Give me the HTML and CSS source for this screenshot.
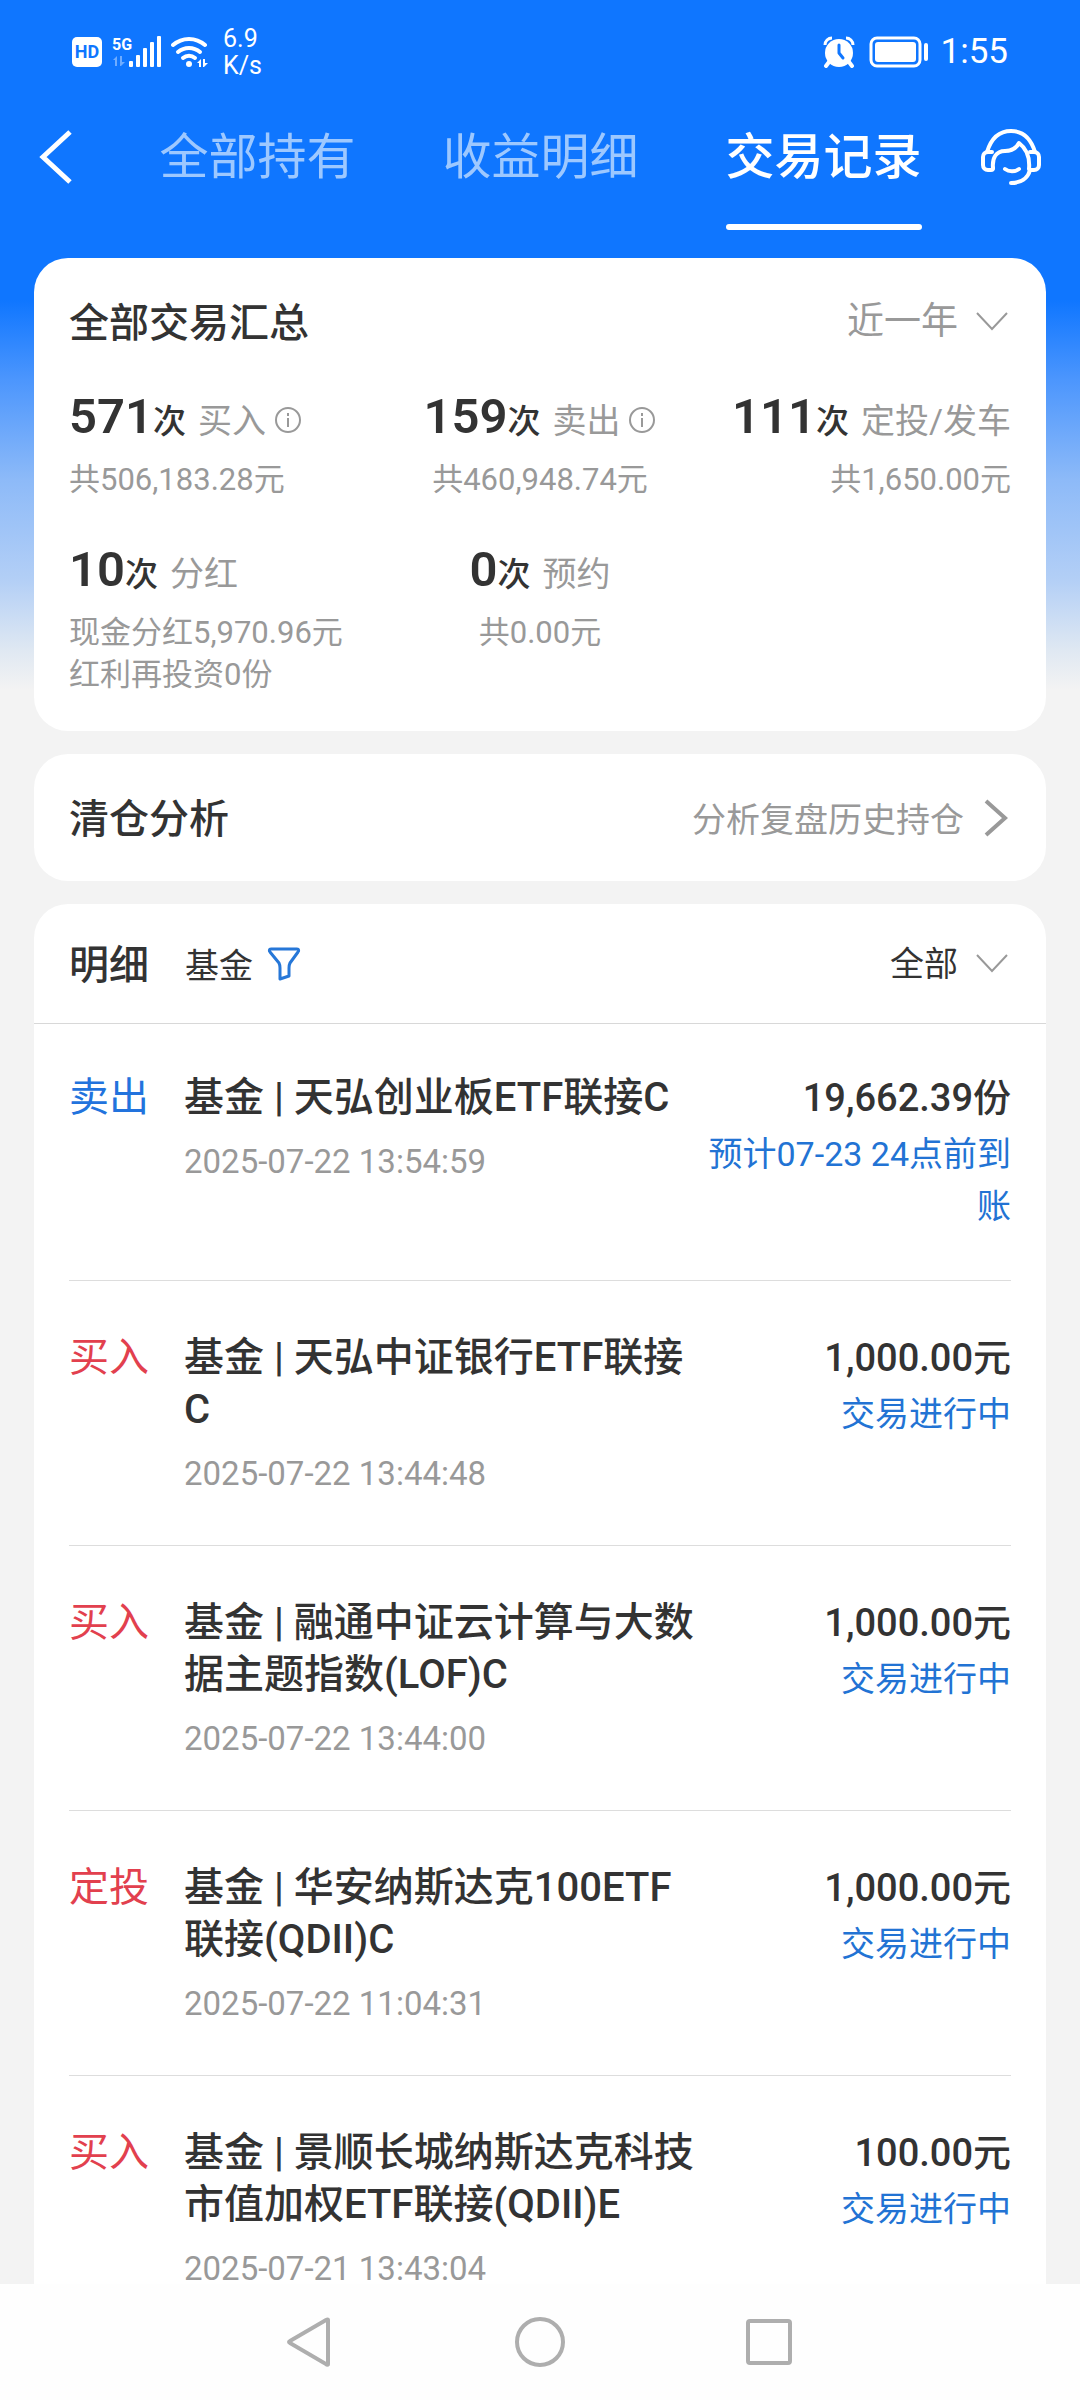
FILE: index.html
```
<!DOCTYPE html>
<html lang="zh-CN">
<head>
    <meta charset="UTF-8">
    <meta name="viewport" content="width=device-width, initial-scale=1.0">
    <title>交易记录</title>
    <link rel="stylesheet" href="styles.css">
</head>
<body>
    <div class="app">
        <!-- 状态栏 -->
        <div class="status-bar">
            <div class="status-left">
                <svg class="icon-hd" width="30" height="30" viewBox="0 0 30 30">
                    <rect width="30" height="30" rx="5" fill="#fff"/>
                    <text x="15" y="21" text-anchor="middle" font-size="18" font-weight="700" fill="#0f76ff">HD</text>
                </svg>
                <svg class="icon-signal" width="51" height="32" viewBox="0 0 51 32" fill="#fff">
                    <text x="0" y="14" font-size="16" font-weight="700">5G</text>
                    <path d="M1 24l4-4v10H3v-6zM8 20h2v6h3l-4 4H8z" opacity=".4"/>
                    <rect x="17" y="25" width="4" height="6" rx="1"/>
                    <rect x="24" y="19" width="4" height="12" rx="1"/>
                    <rect x="31" y="12" width="4" height="19" rx="1"/>
                    <rect x="38" y="6" width="4" height="25" rx="1"/>
                    <rect x="45" y="0" width="4" height="31" rx="1"/>
                </svg>
                <svg class="icon-wifi" width="38" height="32" viewBox="0 0 38 32" fill="none" stroke="#fff" stroke-width="4" stroke-linecap="round">
                    <path d="M2 9a24 24 0 0 1 32 0"/>
                    <path d="M7 16a17 17 0 0 1 22 0"/>
                    <path d="M12 22a9 9 0 0 1 12 0"/>
                    <circle cx="18" cy="28" r="3" fill="#fff" stroke="none"/>
                    <path d="M26 27l4-4v8h-2v-4zM32 23h2v4h3l-4 4h-1z" fill="#fff" stroke="none"/>
                </svg>
                <div class="net-speed">6.9<br>K/s</div>
            </div>
            <div class="status-right">
                <svg class="icon-alarm" width="32" height="32" viewBox="0 0 32 32" fill="#fff">
                    <circle cx="16" cy="17" r="14"/>
                    <path d="M2 9a7 7 0 0 1 7-7M23 2a7 7 0 0 1 7 7" fill="none" stroke="#fff" stroke-width="3"/>
                    <path d="M6 26l-3 4M26 26l3 4" stroke="#fff" stroke-width="4" stroke-linecap="round"/>
                    <path d="M16 9v8l4 5" fill="none" stroke="#0f76ff" stroke-width="3" stroke-linecap="round" stroke-linejoin="round"/>
                </svg>
                <svg class="icon-battery" width="60" height="32" viewBox="0 0 60 32" fill="none">
                    <rect x="2" y="2" width="49" height="28" rx="6" stroke="#fff" stroke-width="3"/>
                    <rect x="6" y="6" width="41" height="20" rx="3" fill="#fff"/>
                    <rect x="55" y="7" width="4" height="18" rx="2" fill="#fff"/>
                </svg>
                <span class="clock">1:55</span>
            </div>
        </div>

        <!-- 顶部导航 -->
        <header class="top-nav">
            <button class="icon-btn" aria-label="返回">
                <svg width="34" height="54" viewBox="0 0 34 54" fill="none" stroke="#fff" stroke-width="5">
                    <path d="M31 2L4 27l27 25"/>
                </svg>
            </button>
            <nav class="tabs">
                <a class="tab" href="#hold">全部持有</a>
                <a class="tab" href="#profit">收益明细</a>
                <a class="tab active" href="#record">交易记录</a>
            </nav>
            <button class="icon-btn" aria-label="客服">
                <svg width="60" height="56" viewBox="0 0 60 56" fill="none" stroke="#fff" stroke-width="4" stroke-linecap="round" stroke-linejoin="round">
                    <path d="M6 23C10 10 18 2 30 2s20 8 24 21"/>
                    <path d="M12 39c0 2-1 2-2 2H7c-3 0-5-2-5-5v-8c0-3 2-5 5-5h4"/>
                    <path d="M12 39c-1-10 3-17 12-17 7 0 11-2 14-8 8 6 11 15 10 26"/>
                    <path d="M49 23h4c3 0 5 2 5 5v8c0 3-2 5-5 5h-4c-2 8-9 13-19 13"/>
                    <path d="M24 40c4 3 10 3 14 0"/>
                </svg>
            </button>
        </header>

        <main class="content">
            <!-- 交易汇总 -->
            <section class="card summary">
                <div class="card-head">
                    <h2 class="card-title">全部交易汇总</h2>
                    <div class="picker">
                        <select class="picker-select range" aria-label="时间范围">
                            <option>近一年</option>
                        </select>
                        <svg class="arrow-down" width="32" height="20" viewBox="0 0 32 20"><path d="M1 1l15 16L31 1"/></svg>
                    </div>
                </div>
                <div class="stats">
                    <div class="stat">
                        <div class="stat-main"><b>571</b><span class="unit">次</span><span class="name">买入</span><button class="info" aria-label="买入说明"><svg width="28" height="28" viewBox="0 0 28 28"><circle cx="14" cy="14" r="12"/><path d="M14 12v9M14 7v3"/></svg></button></div>
                        <div class="stat-sub">共506,183.28元</div>
                    </div>
                    <div class="stat center">
                        <div class="stat-main"><b>159</b><span class="unit">次</span><span class="name">卖出</span><button class="info" aria-label="卖出说明"><svg width="28" height="28" viewBox="0 0 28 28"><circle cx="14" cy="14" r="12"/><path d="M14 12v9M14 7v3"/></svg></button></div>
                        <div class="stat-sub">共460,948.74元</div>
                    </div>
                    <div class="stat right">
                        <div class="stat-main"><b>111</b><span class="unit">次</span><span class="name">定投/发车</span></div>
                        <div class="stat-sub">共1,650.00元</div>
                    </div>
                    <div class="stat">
                        <div class="stat-main"><b>10</b><span class="unit">次</span><span class="name">分红</span></div>
                        <div class="stat-sub">现金分红5,970.96元<br>红利再投资0份</div>
                    </div>
                    <div class="stat center">
                        <div class="stat-main"><b>0</b><span class="unit">次</span><span class="name">预约</span></div>
                        <div class="stat-sub">共0.00元</div>
                    </div>
                </div>
            </section>

            <!-- 清仓分析 -->
            <a class="card analysis" href="#analysis">
                <span class="card-title">清仓分析</span>
                <span class="analysis-link">分析复盘历史持仓
                    <svg width="24" height="38" viewBox="0 0 24 38"><path d="M2 2l19 17L2 36"/></svg>
                </span>
            </a>

            <!-- 明细列表 -->
            <section class="card detail">
                <div class="detail-head">
                    <h2 class="card-title">明细</h2>
                    <button class="filter">基金
                        <svg width="34" height="34" viewBox="0 0 34 34"><path d="M4 2h26c2 0 2 2 1 3l-8 11c-1 2-1 3-1 5v8l-9 3V21c0-2 0-3-1-5L3 5C2 4 2 2 4 2z"/></svg>
                    </button>
                    <div class="picker">
                        <select class="picker-select" aria-label="交易类型">
                            <option>全部</option>
                        </select>
                        <svg class="arrow-down" width="32" height="20" viewBox="0 0 32 20"><path d="M1 1l15 16L31 1"/></svg>
                    </div>
                </div>
                <ul class="list">
                    <li class="item">
                        <span class="type sell">卖出</span>
                        <div class="info-col">
                            <h3>基金 | 天弘创业板ETF联接C</h3>
                            <time>2025-07-22 13:54:59</time>
                        </div>
                        <div class="amount-col">
                            <p class="amount">19,662.39份</p>
                            <p class="state">预计07-23 24点前到账</p>
                        </div>
                    </li>
                    <li class="item">
                        <span class="type">买入</span>
                        <div class="info-col">
                            <h3>基金 | 天弘中证银行ETF联接C</h3>
                            <time>2025-07-22 13:44:48</time>
                        </div>
                        <div class="amount-col">
                            <p class="amount">1,000.00元</p>
                            <p class="state">交易进行中</p>
                        </div>
                    </li>
                    <li class="item">
                        <span class="type">买入</span>
                        <div class="info-col">
                            <h3>基金 | 融通中证云计算与大数据主题指数(LOF)C</h3>
                            <time>2025-07-22 13:44:00</time>
                        </div>
                        <div class="amount-col">
                            <p class="amount">1,000.00元</p>
                            <p class="state">交易进行中</p>
                        </div>
                    </li>
                    <li class="item">
                        <span class="type">定投</span>
                        <div class="info-col">
                            <h3>基金 | 华安纳斯达克100ETF联接(QDII)C</h3>
                            <time>2025-07-22 11:04:31</time>
                        </div>
                        <div class="amount-col">
                            <p class="amount">1,000.00元</p>
                            <p class="state">交易进行中</p>
                        </div>
                    </li>
                    <li class="item">
                        <span class="type">买入</span>
                        <div class="info-col">
                            <h3>基金 | 景顺长城纳斯达克科技市值加权ETF联接(QDII)E</h3>
                            <time>2025-07-21 13:43:04</time>
                        </div>
                        <div class="amount-col">
                            <p class="amount">100.00元</p>
                            <p class="state">交易进行中</p>
                        </div>
                    </li>
                </ul>
            </section>
        </main>

        <!-- 系统导航键 -->
        <div class="system-nav">
            <button class="icon-btn" aria-label="返回键">
                <svg width="52" height="52" viewBox="0 0 52 52"><path d="M43 4v44c0 1-1 1-2 0L5 27q-2-1 0-2L41 4q2-1 2 0z"/></svg>
            </button>
            <button class="icon-btn" aria-label="主页键">
                <svg width="52" height="52" viewBox="0 0 52 52"><circle cx="26" cy="26" r="23"/></svg>
            </button>
            <button class="icon-btn" aria-label="任务键">
                <svg width="52" height="52" viewBox="0 0 52 52"><rect x="5" y="5" width="42" height="42" rx="2"/></svg>
            </button>
        </div>
    </div>
</body>
</html>
```

FILE: styles.css
```
* {
    margin: 0;
    padding: 0;
    box-sizing: border-box;
}
body {
    font-family: Roboto, 'Noto Sans CJK SC', sans-serif;
    color: #333;
    background: #f3f3f3;
}
button, select {
    font: inherit;
    color: inherit;
    background: none;
    border: none;
    cursor: pointer;
}
a {
    color: inherit;
    text-decoration: none;
}
svg {
    display: block;
    flex: none;
}
.app {
    display: flex;
    flex-direction: column;
    height: 100vh;
    background: linear-gradient(#0f76ff 300px, #4c96fd 380px, #8dbaf8 480px, #b3cff6 580px, #dfe8f2 650px, #f3f3f3 690px);
}

/* 状态栏 */
.status-bar {
    display: flex;
    justify-content: space-between;
    padding: 25px 72px 0;
    color: #fff;
}
.status-left, .status-right {
    display: flex;
    align-items: center;
    height: 54px;
}
.icon-signal {
    margin-left: 10px;
}
.icon-wifi {
    margin-left: 8px;
}
.net-speed {
    margin-left: 14px;
    font-size: 25px;
    line-height: 27px;
}
.icon-battery {
    margin: 0 12px 0 14px;
}
.clock {
    font-size: 35px;
    line-height: 54px;
}

/* 顶部导航 */
.icon-btn {
    display: flex;
    align-items: center;
    justify-content: center;
}
.top-nav {
    display: flex;
    align-items: flex-start;
    justify-content: space-between;
    padding: 43px 39px 28px;
}
.top-nav .icon-btn {
    height: 70px;
}
.tabs {
    display: flex;
    gap: 87px;
    margin-left: 27px;
}
.tab {
    padding-bottom: 36px;
    font-size: 49px;
    line-height: 72px;
    color: #9dc8ff;
}
.tab.active {
    position: relative;
    font-weight: 500;
    color: #fff;
}
.tab.active::after {
    content: '';
    position: absolute;
    left: 0;
    right: 0;
    bottom: 0;
    height: 6px;
    border-radius: 3px;
    background: #fff;
}

/* 卡片 */
.content {
    flex: 1;
    min-height: 0;
    padding: 0 34px;
    overflow-y: auto;
    scrollbar-width: none;
}
.card {
    display: block;
    margin-bottom: 23px;
    padding: 0 35px;
    border-radius: 34px;
    background: #fff;
}
.card-title {
    padding-top: 4px;
    font-size: 40px;
    font-weight: 500;
    line-height: 52px;
}
.card-head {
    display: flex;
    align-items: center;
    justify-content: space-between;
    padding: 36px 0 37px;
}
.picker {
    display: flex;
    align-items: center;
    gap: 18px;
    padding-right: 3px;
}
.picker-select {
    appearance: none;
    font-size: 34px;
    line-height: 52px;
}
.picker-select.range {
    font-size: 37px;
    color: #999;
}
.arrow-down {
    fill: none;
    stroke: #999;
    stroke-width: 2;
    pointer-events: none;
}

/* 汇总数据 */
.summary {
    padding-bottom: 35px;
}
.stats {
    display: grid;
    grid-template-columns: 1fr 1fr 1fr;
    row-gap: 39px;
}
.center {
    text-align: center;
}
.right {
    text-align: right;
}
.stat-main {
    height: 60px;
    font-size: 49px;
    line-height: 60px;
    white-space: nowrap;
}
.stat-main b {
    font-weight: 600;
}
.unit {
    font-size: 33px;
    font-weight: 500;
}
.name {
    margin-left: 12px;
    font-size: 34px;
    color: #999;
}
.info {
    margin-left: 8px;
    vertical-align: middle;
}
.info svg {
    fill: none;
    stroke: #999;
    stroke-width: 2;
}
.stat-sub {
    margin-top: 12px;
    font-size: 31px;
    line-height: 42px;
    color: #999;
}

/* 清仓分析 */
.analysis {
    display: flex;
    align-items: center;
    justify-content: space-between;
    height: 127px;
}
.analysis-link {
    display: flex;
    align-items: center;
    gap: 20px;
    font-size: 34px;
    color: #999;
}
.analysis-link svg {
    margin-right: 3px;
    fill: none;
    stroke: #999;
    stroke-width: 4;
}

/* 明细 */
.detail {
    margin-bottom: 0;
    padding: 0;
}
.detail-head {
    display: flex;
    align-items: center;
    height: 120px;
    padding: 0 35px;
    border-bottom: 1px solid #d8d8d8;
}
.filter {
    display: flex;
    align-items: center;
    gap: 14px;
    margin: 0 auto 0 36px;
    font-size: 34px;
}
.filter svg {
    fill: none;
    stroke: #2677d8;
    stroke-width: 3;
    stroke-linejoin: round;
}
.list {
    padding: 0 35px;
    list-style: none;
}
.item {
    display: flex;
    align-items: flex-start;
    padding: 51px 0 45px;
    border-bottom: 1px solid #ddd;
    line-height: 52px;
}
.item:first-child {
    padding: 48px 0;
}
.item:last-child {
    border-bottom: none;
}
.type {
    flex: none;
    width: 115px;
    font-size: 40px;
    color: #e2404e;
}
.type.sell {
    color: #2273dd;
}
.info-col {
    flex: none;
    width: 516px;
}
.info-col h3 {
    font-size: 40px;
    font-weight: 500;
    line-height: 52px;
}
.info-col time {
    display: block;
    margin-top: 12px;
    font-size: 33px;
    color: #999;
}
.amount-col {
    flex: 1;
    text-align: right;
}
.amount {
    font-size: 38px;
    font-weight: 500;
}
.state {
    margin-top: 4px;
    font-size: 34px;
    color: #2273d4;
}

/* 系统导航键 */
.system-nav {
    display: flex;
    align-items: center;
    justify-content: center;
    gap: 177px;
    height: 116px;
    background: #fefefe;
}
.system-nav svg {
    fill: none;
    stroke: #aeaeae;
    stroke-width: 4;
}
```
